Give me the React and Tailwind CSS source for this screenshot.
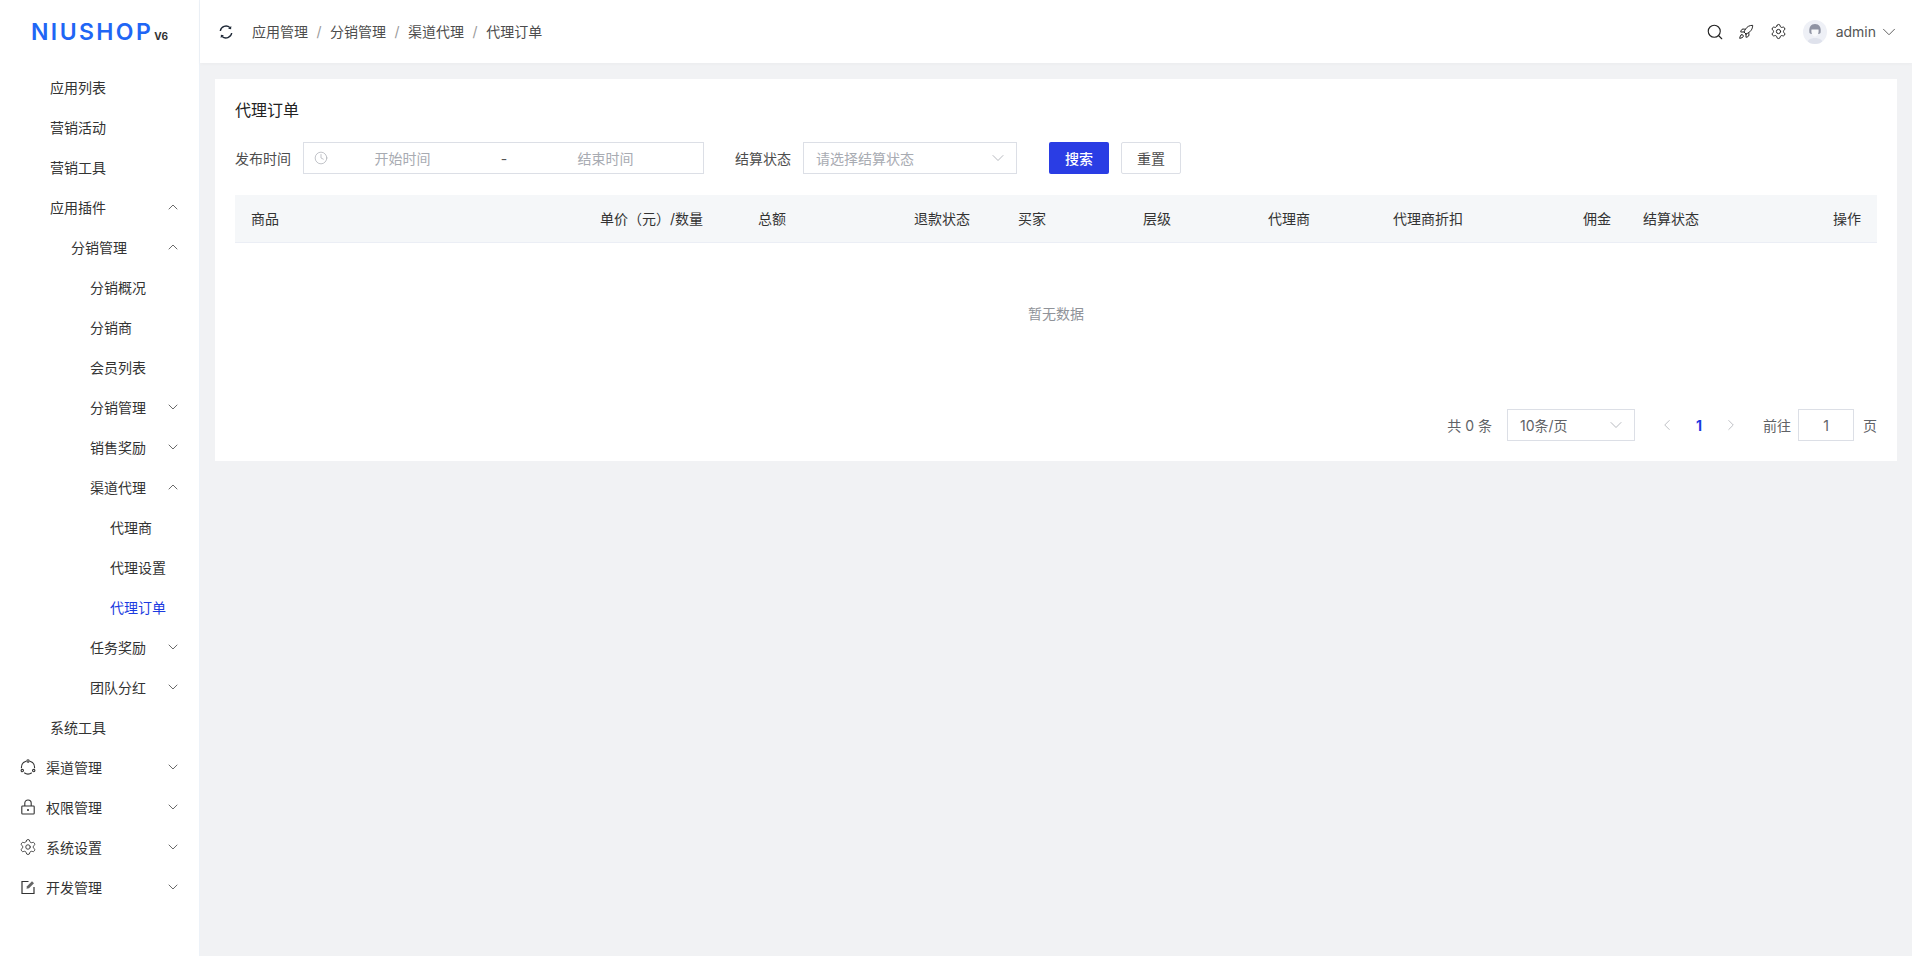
import { ChevronDown, ChevronUp, ChevronLeft, ChevronRight, Clock, Rocket, Search, Settings } from 'lucide-react';

const menu = [
  { label: '应用列表', level: 1 },
  { label: '营销活动', level: 1 },
  { label: '营销工具', level: 1 },
  { label: '应用插件', level: 1, arrow: 'up' },
  { label: '分销管理', level: 2, arrow: 'up' },
  { label: '分销概况', level: 3 },
  { label: '分销商', level: 3 },
  { label: '会员列表', level: 3 },
  { label: '分销管理', level: 3, arrow: 'down' },
  { label: '销售奖励', level: 3, arrow: 'down' },
  { label: '渠道代理', level: 3, arrow: 'up' },
  { label: '代理商', level: 4 },
  { label: '代理设置', level: 4 },
  { label: '代理订单', level: 4, active: true },
  { label: '任务奖励', level: 3, arrow: 'down' },
  { label: '团队分红', level: 3, arrow: 'down' },
  { label: '系统工具', level: 1 },
];

const levelPadding = {
  1: 'pl-[50px]',
  2: 'pl-[71px]',
  3: 'pl-[90px]',
  4: 'pl-[110px]',
};

const ChannelIcon = () => (
  <svg width="16" height="16" viewBox="0 0 16 16" fill="none" stroke="currentColor" strokeWidth="1.1">
    <circle cx="8" cy="1.900" r="1.200" />
    <circle cx="2.300" cy="11.600" r="1.200" />
    <circle cx="13.700" cy="11.600" r="1.200" />
    <path d="M6 2.300A6.500 6.500 0 0 0 1.500 9.200M10 2.300A6.500 6.500 0 0 1 14.500 9.200M4.200 13.700A6.500 6.500 0 0 0 11.800 13.700" />
  </svg>
);

const LockIcon = () => (
  <svg width="16" height="16" viewBox="0 0 16 16" fill="none" stroke="currentColor" strokeWidth="1.1">
    <rect x="1.800" y="7" width="12.400" height="8" rx="0.800" />
    <path d="M4.800 7V4.200a3.200 3.200 0 0 1 6.400 0V7" />
    <path d="M8 10v2" strokeWidth="1.600" />
  </svg>
);

const GearIcon = () => (
  <Settings size={18} strokeWidth={1.2} className="-ml-[1px]" />
);

const EditIcon = () => (
  <svg width="16" height="16" viewBox="0 0 16 16" fill="none" stroke="currentColor" strokeWidth="1.2">
    <path d="M8.500 2.500H2v12h12V8" />
    <path d="M6.500 9.800 7 7.300 12 2.200 14 4.200 9 9.300z" fill="#666" stroke="none" />
  </svg>
);

const RefreshIcon = () => (
  <svg width="14" height="14" viewBox="0 0 14 14" fill="none" stroke="#1f2937" strokeWidth="1.400">
    <path d="M1.300 6A5.800 5.800 0 0 1 10.900 2.600" />
    <path d="M12.700 8A5.800 5.800 0 0 1 3.100 11.400" />
    <path d="M12.300 1 12.100 4.300 9.100 3.700z" fill="#1f2937" stroke="none" />
    <path d="M1.700 13 1.900 9.700 4.900 10.300z" fill="#1f2937" stroke="none" />
  </svg>
);

const AvatarIcon = () => (
  <svg width="24" height="24" viewBox="0 0 24 24" className="rounded-full">
    <rect width="24" height="24" fill="#eef0f6" />
    <path d="M4 24c0-4 3.500-6 8-6s8 2 8 6z" fill="#dfe2ec" />
    <path d="M6.500 13C5.500 7 8 4 12 4s6.500 3 5.500 9l-1.500 1H8z" fill="#8f93a3" />
    <path d="M8.500 9.500h7c.5 3-.5 7-3.500 7s-4-4-3.500-7z" fill="#f8f9fb" />
  </svg>
);

const bottomMenu = [
  { label: '渠道管理', icon: <ChannelIcon /> },
  { label: '权限管理', icon: <LockIcon /> },
  { label: '系统设置', icon: <GearIcon /> },
  { label: '开发管理', icon: <EditIcon /> },
];

const columns = [
  { label: '商品', cls: 'w-[264px] pl-4' },
  { label: '单价（元）/数量', cls: 'w-[220px] pr-4 text-right' },
  { label: '总额', cls: 'w-[160px] pl-[39px]' },
  { label: '退款状态', cls: 'w-[107px] pr-4 text-right' },
  { label: '买家', cls: 'w-[113px] pl-[32px]' },
  { label: '层级', cls: 'w-[116px] text-center' },
  { label: '代理商', cls: 'w-[111px] pr-4 text-right' },
  { label: '代理商折扣', cls: 'w-[153px] pr-4 text-right' },
  { label: '佣金', cls: 'w-[148px] pr-4 text-right' },
  { label: '结算状态', cls: 'w-[153px] pl-[16px]' },
  { label: '操作', cls: 'w-[95px] pr-[14px] text-right' },
];

const Sidebar = () => (
  <aside className="w-[200px] shrink-0 h-full bg-white border-r border-[#edf2f8]">
    <div className="h-[64px] flex items-baseline pl-[31px] pt-[18px]">
      <span className="text-[23px] leading-[28px] font-semibold tracking-[2.400px] text-[#1f66f5] font-['Inter',sans-serif]">NIUSHOP</span>
      <span className="text-[10px] font-bold ml-[1px] text-[#333]">V6</span>
    </div>
    <nav className="pt-[3px] text-[14px] text-[#333]">
      {menu.map((item, i) => (
        <div key={i} className={`h-10 flex items-center justify-between pr-[18px] ${levelPadding[item.level]} ${item.active ? 'text-[#1c3be0]' : ''}`}>
          <span>{item.label}</span>
          {item.arrow === 'up' && <ChevronUp size={16} strokeWidth={1.1} />}
          {item.arrow === 'down' && <ChevronDown size={16} strokeWidth={1.1} />}
        </div>
      ))}
      {bottomMenu.map((item) => (
        <div key={item.label} className="h-10 flex items-center pl-[20px] pr-[18px]">
          <span className="w-[26px] shrink-0 text-[#333]">{item.icon}</span>
          <span className="flex-1">{item.label}</span>
          <ChevronDown size={16} strokeWidth={1.1} />
        </div>
      ))}
    </nav>
  </aside>
);

const Header = () => (
  <header className="relative z-10 h-[63px] shrink-0 bg-white shadow-[0_1px_4px_rgba(0,0,0,0.03)] flex items-center pl-[19px] pr-[12px] text-[14px]">
    <RefreshIcon />
    <div className="flex items-center ml-[19px] text-[#4d4d4d]">
      <span>应用管理</span>
      <span className="mx-[8.500px] text-[#9a9a9a]">/</span>
      <span>分销管理</span>
      <span className="mx-[8.500px] text-[#9a9a9a]">/</span>
      <span>渠道代理</span>
      <span className="mx-[8.500px] text-[#9a9a9a]">/</span>
      <span>代理订单</span>
    </div>
    <div className="ml-auto flex items-center text-[#222]">
      <Search size={18} strokeWidth={1.500} />
      <Rocket size={16} strokeWidth={1.500} className="ml-[14px]" />
      <Settings size={17} strokeWidth={1.400} className="ml-[16px]" />
      <span className="ml-[16px] flex"><AvatarIcon /></span>
      <span className="ml-[9px] text-[#555]">admin</span>
      <ChevronDown size={22} strokeWidth={1} className="ml-[2px] text-[#555]" />
    </div>
  </header>
);

const FilterBar = () => (
  <div className="flex items-center mt-[20px] text-[14px] text-[#4d4d4d]">
    <span className="w-[56px]">发布时间</span>
    <div className="w-[401px] h-8 ml-[12px] border border-[#dcdfe6] flex items-center pl-[10px] text-[#a8abb2]">
      <Clock size={14} strokeWidth={1.200} />
      <span className="w-[149px] text-center">开始时间</span>
      <span className="w-[30px] text-center text-[#555] ml-[12px]">-</span>
      <span className="w-[165px] text-center ml-[4px]">结束时间</span>
    </div>
    <span className="ml-[31px] w-[56px]">结算状态</span>
    <div className="w-[214px] h-8 ml-[12px] border border-[#dcdfe6] flex items-center justify-between pl-[12px] pr-[8px] text-[#a8abb2]">
      <span>请选择结算状态</span>
      <ChevronDown size={20} strokeWidth={1} />
    </div>
    <button className="w-[60px] h-8 ml-[32px] rounded-[2px] bg-[#2a3de4] text-white font-medium">搜索</button>
    <button className="w-[60px] h-8 ml-[12px] rounded-[2px] border border-[#dcdfe6] bg-white text-[#4d4d4d]">重置</button>
  </div>
);

const OrderTable = () => (
  <div className="mt-[21px]">
    <div className="h-12 flex items-center bg-[#f5f7f9] border-b border-[#ebeef5] text-[14px] text-[#333]">
      {columns.map((col) => (
        <div key={col.label} className={col.cls}>{col.label}</div>
      ))}
    </div>
    <div className="h-[140px] flex items-center justify-center text-[14px] text-[#909399]">暂无数据</div>
  </div>
);

const Pagination = () => (
  <div className="h-8 mt-[26px] flex items-center justify-end text-[14px] text-[#606266]">
    <span>共 0 条</span>
    <div className="w-[128px] h-8 ml-[15px] border border-[#dcdfe6] flex items-center justify-between pl-[12px] pr-[8px]">
      <span>10条/页</span>
      <ChevronDown size={20} strokeWidth={1} className="text-[#a8abb2]" />
    </div>
    <ChevronLeft size={18} strokeWidth={1} className="ml-[23px] text-[#a8abb2]" />
    <span className="w-[18px] ml-[14px] text-center font-bold text-[#1c3be0]">1</span>
    <ChevronRight size={18} strokeWidth={1} className="ml-[14px] text-[#a8abb2]" />
    <span className="ml-[23px]">前往</span>
    <div className="w-[56px] h-8 ml-[7px] border border-[#dcdfe6] flex items-center justify-center">1</div>
    <span className="ml-[9px]">页</span>
  </div>
);

const App = () => {
  return (
    <div className="flex h-screen w-full overflow-hidden bg-[#f1f2f4] font-['Inter','Noto_Sans_CJK_SC',sans-serif]">
      <Sidebar />
      <div className="flex-1 min-w-0 flex flex-col">
        <Header />
        <main className="flex-1 pt-[16px] px-[15px]">
          <div className="bg-white px-[20px] pt-[19px] h-[382px]">
            <h2 className="text-[16px] leading-[24px] text-[#222]">代理订单</h2>
            <FilterBar />
            <OrderTable />
            <Pagination />
          </div>
        </main>
      </div>
    </div>
  );
};

export default App;
